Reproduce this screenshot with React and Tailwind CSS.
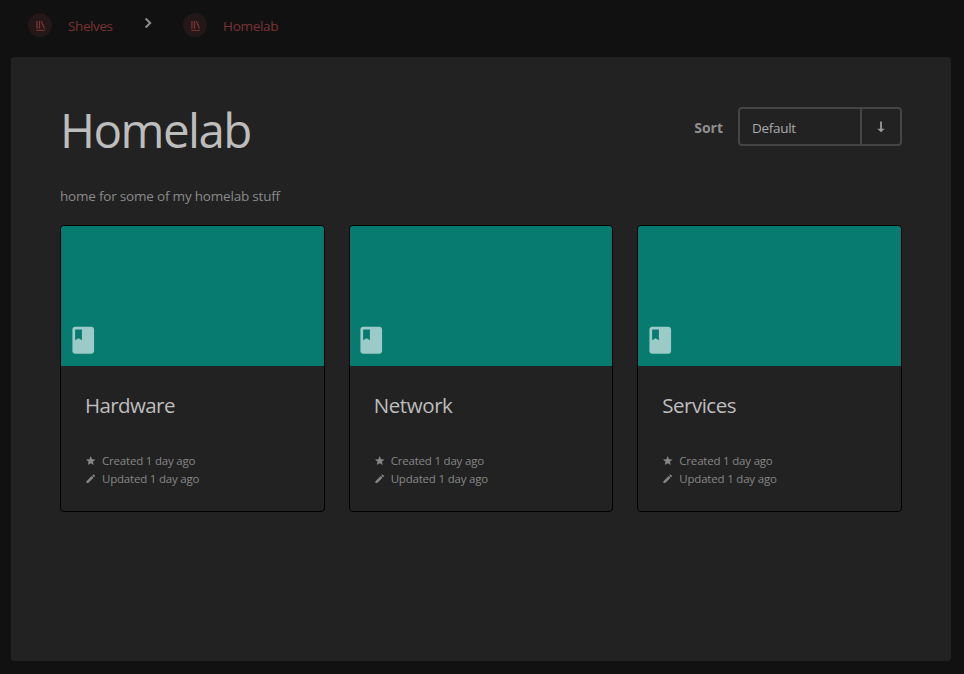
function Svg({ className, children }) {
  return (
    <svg viewBox="0 0 24 24" fill="currentColor" className={className} aria-hidden="true">
      {children}
    </svg>
  );
}

function Crumb({ label, className }) {
  return (
    <a className="flex items-center text-[#7b3333]">
      <span className="flex size-6 items-center justify-center rounded-full bg-[#241718]">
        <Svg className="size-[13px]">
          <path d="M4 20.058h15.892V22H4z" />
          <path d="M6.658 3.643V18h-2.38V3.643zM11.326 3.643V18H8.947V3.643zM14.722 3.856l5.613 13.214-2.19.93-5.613-13.214z" />
        </Svg>
      </span>
      <span className={"ml-4 mt-px text-[13.5px] leading-5 " + className}>{label}</span>
    </a>
  );
}

function Card({ title, titleClass }) {
  return (
    <article className="h-[287px] overflow-hidden rounded-[4px] border border-black">
      <div className="flex h-[140px] items-end bg-[#077b70] pb-[10px] pl-[5.8px] text-[#9ccac6]">
        <Svg className="size-[32.5px]">
          <path d="M18 2H6c-1.1 0-2 .9-2 2v16c0 1.1.9 2 2 2h12c1.1 0 2-.9 2-2V4c0-1.1-.9-2-2-2zM6 4h5v8l-2.5-1.5L6 12V4z" />
        </Svg>
      </div>
      <div className="px-6 pt-6">
        <h2 className={"h-8 text-[20.5px] leading-[31px] text-[#bdbdbd] " + titleClass}>{title}</h2>
        <div className="mt-[30px] text-[11.5px] leading-[18px] tracking-[-0.2px] text-[#868686]">
          <div className="flex items-center">
            <Svg className="mr-[5.5px] size-[11.5px]">
              <path d="M12 17.27 18.18 21l-1.64-7.03L22 9.24l-7.19-.61L12 2 9.19 8.63 2 9.24l5.46 4.73L5.82 21z" />
            </Svg>
            <span className="whitespace-nowrap">Created 1 day ago</span>
          </div>
          <div className="flex items-center">
            <Svg className="mr-[5.5px] size-[11.5px]">
              <path d="M3 17.25V21h3.75L17.81 9.94l-3.75-3.75L3 17.25zM20.71 7.04c.39-.39.39-1.02 0-1.41l-2.34-2.34c-.39-.39-1.02-.39-1.41 0l-1.83 1.83 3.75 3.75 1.83-1.83z" />
            </Svg>
            <span className="whitespace-nowrap">Updated 1 day ago</span>
          </div>
        </div>
      </div>
    </article>
  );
}

export default function App() {
  return (
    <div className="flex h-[674px] w-[964px] flex-col bg-[#111111] font-['Open_Sans',sans-serif]">
      <nav className="flex h-[57px] shrink-0 items-start pl-7 pt-[13px]">
        <Crumb label="Shelves" className="w-[46px] tracking-[-0.4px]" />
        <Svg className="ml-[24px] size-[20px] text-[#8f8f8f]">
          <path d="M10 6 8.59 7.41 13.17 12l-4.58 4.59L10 18l6-6z" stroke="currentColor" strokeWidth="0.6" />
        </Svg>
        <div className="ml-[25px]">
          <Crumb label="Homelab" className="tracking-[-0.3px]" />
        </div>
      </nav>
      <main className="ml-[11px] h-[604px] w-[940px] rounded-[3px] bg-[#222222] pl-[49px] pr-[49px] pt-[50px]">
        <div className="flex h-[60px] items-start justify-between">
          <h1 className="-mt-[7px] text-[47.5px] leading-[60px] tracking-[-1.55px] text-[#bdbdbd]">Homelab</h1>
          <div className="flex items-center">
            <span className="mr-[15px] mt-[2px] text-[14px] font-bold leading-5 text-[#8f8f8f]">Sort</span>
            <div className="flex h-[39px] w-[164px] rounded-[4px] border-2 border-[#444444]">
              <div className="flex w-[122px] items-center border-r-2 border-[#444444] pl-3 pt-[3px] text-[13.5px] tracking-[-0.3px] text-[#aaaaaa]">
                <span>Default</span>
              </div>
              <div className="flex flex-1 items-center justify-center text-[#999999]">
                <svg viewBox="0 0 8 12" fill="currentColor" className="h-3 w-2">
                  <path d="M3.1.5h1.8v7.2h2.8L4 11.3.3 7.7h2.8z" />
                </svg>
              </div>
            </div>
          </div>
        </div>
        <p className="mt-[19px] text-[13.5px] leading-5 tracking-[-0.2px] text-[#8a8a8a]"><span>home for some of my homelab stuff</span></p>
        <div className="mt-[19px] grid grid-cols-3 gap-6">
          <Card title="Hardware" titleClass="tracking-[-0.6px]" />
          <Card title="Network" titleClass="tracking-[-0.4px]" />
          <Card title="Services" titleClass="tracking-[-0.5px]" />
        </div>
      </main>
    </div>
  );
}
